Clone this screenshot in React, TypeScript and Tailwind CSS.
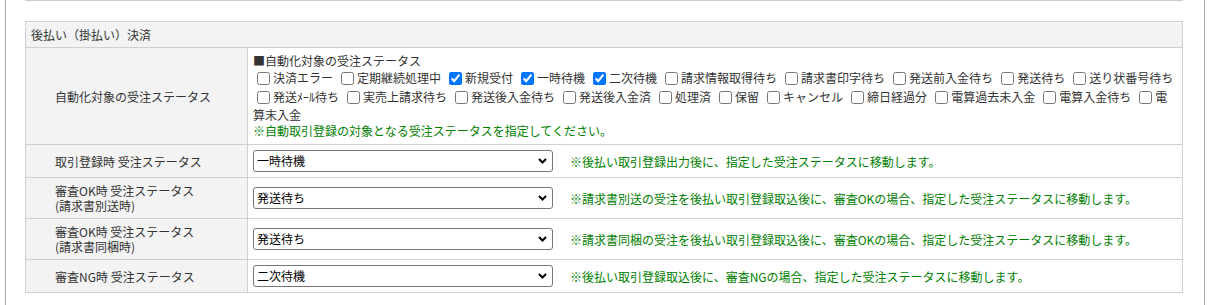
import React from "react";

const line1: [string, boolean][] = [
  ["決済エラー", false],
  ["定期継続処理中", false],
  ["新規受付", true],
  ["一時待機", true],
  ["二次待機", true],
  ["請求情報取得待ち", false],
  ["請求書印字待ち", false],
  ["発送前入金待ち", false],
  ["発送待ち", false],
  ["送り状番号待ち", false],
];

const line2: string[] = [
  "発送ﾒｰﾙ待ち",
  "実売上請求待ち",
  "発送後入金待ち",
  "発送後入金済",
  "処理済",
  "保留",
  "キャンセル",
  "締日経過分",
  "電算過去未入金",
  "電算入金待ち",
];

function Cb({ checked }: { checked?: boolean }) {
  return (
    <input
      type="checkbox"
      defaultChecked={checked}
      className="ml-[4px] mr-[3px] my-[3px] w-[13px] h-[13px] align-[-2px] accent-[#0075ff]"
    />
  );
}

function Sel({ value }: { value: string }) {
  return (
    <div className="relative w-[300px] h-[22px] shrink-0">
      <select
        defaultValue={value}
        className="block appearance-none w-full h-full border border-[#767676] rounded-[3px] bg-white pl-[3px] text-[12px] text-black leading-[20px]"
      >
        <option>{value}</option>
      </select>
      <svg
        className="absolute right-[6px] top-[8px] pointer-events-none"
        width="9"
        height="6"
        viewBox="0 0 9 6"
      >
        <path d="M1 1 L4.5 4.5 L8 1" fill="none" stroke="#000" strokeWidth="2" />
      </svg>
    </div>
  );
}

const rows: { label: React.ReactNode; value: string; note: string }[] = [
  {
    label: "取引登録時 受注ステータス",
    value: "一時待機",
    note: "※後払い取引登録出力後に、指定した受注ステータスに移動します。",
  },
  {
    label: (
      <>
        審査OK時 受注ステータス
        <br />
        (請求書別送時)
      </>
    ),
    value: "発送待ち",
    note: "※請求書別送の受注を後払い取引登録取込後に、審査OKの場合、指定した受注ステータスに移動します。",
  },
  {
    label: (
      <>
        審査OK時 受注ステータス
        <br />
        (請求書同梱時)
      </>
    ),
    value: "発送待ち",
    note: "※請求書同梱の受注を後払い取引登録取込後に、審査OKの場合、指定した受注ステータスに移動します。",
  },
  {
    label: "審査NG時 受注ステータス",
    value: "二次待機",
    note: "※後払い取引登録取込後に、審査NGの場合、指定した受注ステータスに移動します。",
  },
];

export default function App() {
  return (
    <div className="h-[305px] overflow-hidden bg-white font-['Noto_Sans_CJK_JP','Noto_Sans',sans-serif] text-[12px] text-[#333]">
      <div className="ml-[5px] w-[1200px] h-full border-x border-[#a9a9a9] pl-[19px]">
        <div className="w-[1158px] h-[1px] border-b border-[#cccccc]" />
        <table className="mt-[20px] w-[1158px] table-fixed border-collapse">
          <colgroup>
            <col className="w-[222px]" />
            <col />
          </colgroup>
          <tbody>
            <tr>
              <th
                colSpan={2}
                className="h-[26px] border border-[#d0d0d0] bg-[#f2f3f2] px-[5px] py-0 text-left font-normal leading-[15px]"
              >
                後払い（掛払い）決済
              </th>
            </tr>
            <tr>
              <th className="border border-[#d0d0d0] bg-[#f2f3f2] pl-[29px] pr-[5px] text-left font-normal leading-[15px]">
                自動化対象の受注ステータス
              </th>
              <td className="border border-[#d0d0d0] bg-white px-[5px] py-[5px] leading-[16px]">
                <div>■自動化対象の受注ステータス</div>
                <div>
                  {line1.map(([l, c], i) => (
                    <React.Fragment key={l}>
                      <Cb checked={c} />
                      {l}
                      {i < line1.length - 1 && <span className="inline-block w-[4px]" />}
                    </React.Fragment>
                  ))}
                  <br />
                  {line2.map((l) => (
                    <React.Fragment key={l}>
                      <Cb />
                      {l}
                      <span className="inline-block w-[4px]" />
                    </React.Fragment>
                  ))}
                  <Cb />電
                  <br />
                  算末入金
                </div>
                <div className="text-[#008000]">※自動取引登録の対象となる受注ステータスを指定してください。</div>
              </td>
            </tr>
            {rows.map((r, i) => (
              <tr key={i}>
                <th className="h-[33px] border border-[#d0d0d0] bg-[#f2f3f2] pl-[29px] pr-[5px] py-[5px] text-left font-normal leading-[15px]">
                  {r.label}
                </th>
                <td className="border border-[#d0d0d0] bg-white px-[5px] py-0">
                  <div className="flex items-center">
                    <Sel value={r.value} />
                    <span className="ml-[17px] text-[#008000] leading-[15px]">{r.note}</span>
                  </div>
                </td>
              </tr>
            ))}
          </tbody>
        </table>
      </div>
    </div>
  );
}
